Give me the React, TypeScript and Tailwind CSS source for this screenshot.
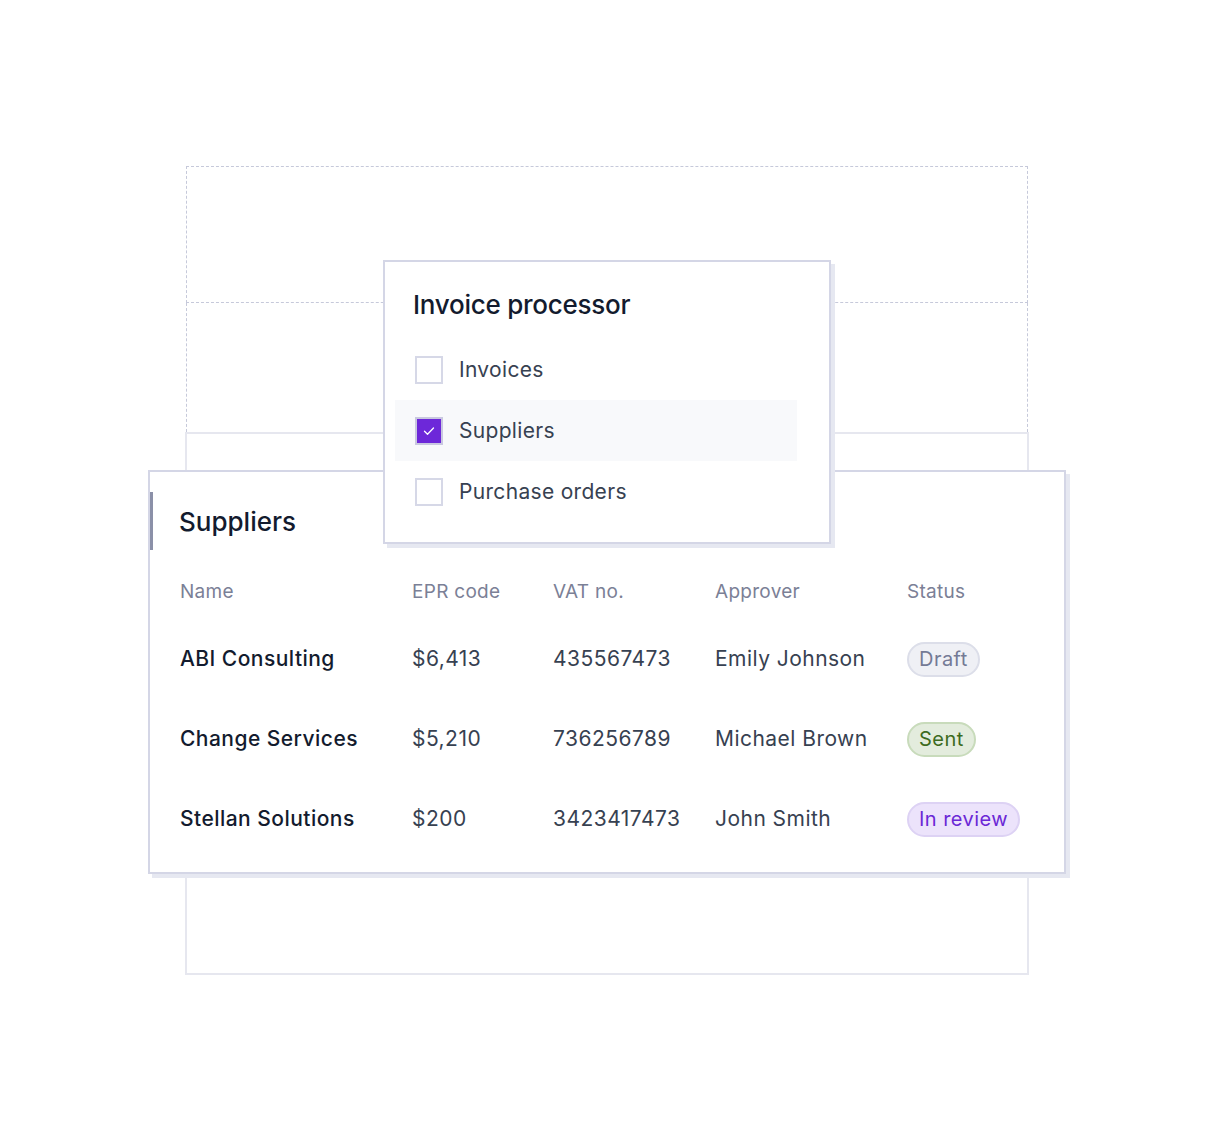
import { useState } from 'react';

type Status = 'Draft' | 'Sent' | 'In review';

const suppliers: { name: string; epr: string; vat: string; approver: string; status: Status }[] = [
  { name: 'ABI Consulting', epr: '$6,413', vat: '435567473', approver: 'Emily Johnson', status: 'Draft' },
  { name: 'Change Services', epr: '$5,210', vat: '736256789', approver: 'Michael Brown', status: 'Sent' },
  { name: 'Stellan Solutions', epr: '$200', vat: '3423417473', approver: 'John Smith', status: 'In review' },
];

const badgeStyles: Record<Status, string> = {
  Draft: 'bg-[#eff0f5] border-[#dcdee9] text-[#747a95]',
  Sent: 'bg-[#e3ecdd] border-[#c8dbbb] text-[#3d6b1e]',
  'In review': 'bg-[#ece3fb] border-[#ddd2f4] text-[#6b28d6]',
};

const cols = 'grid grid-cols-[232px_141px_162px_192px_1fr] pl-[30px]';

function Checkbox({ checked }: { checked: boolean }) {
  return (
    <span
      className={
        'flex h-[28px] w-[28px] items-center justify-center border-2 ' +
        (checked ? 'bg-[#6d28d9] border-[#c9c8e0]' : 'bg-white border-[#d6d8e7]')
      }
    >
      {checked && (
        <svg width="14" height="14" viewBox="0 0 14 14" fill="none">
          <path d="M2.5 7.2l3 3 6-6.2" stroke="white" strokeWidth="1.3" strokeLinecap="round" strokeLinejoin="round" />
        </svg>
      )}
    </span>
  );
}

function ProcessorMenu() {
  const [selected, setSelected] = useState<string[]>(['Suppliers']);
  const options = ['Invoices', 'Suppliers', 'Purchase orders'];

  const toggle = (opt: string) =>
    setSelected((s) => (s.includes(opt) ? s.filter((x) => x !== opt) : [...s, opt]));

  return (
    <div className="absolute left-[198px] top-[94px] w-[448px] h-[284px] bg-white border-2 border-[#d4d6e6] shadow-[4px_4px_0_#e6e8f1] pt-[26px]">
      <h2 className="px-[28px] text-[26px] leading-[34px] tracking-[-0.01em] font-medium text-[#131b2e]">
        Invoice processor
      </h2>
      <div className="mt-[17px] ml-[10px] mr-[32px]">
        {options.map((opt) => (
          <button
            key={opt}
            onClick={() => toggle(opt)}
            className={
              'flex h-[61px] w-full items-center gap-[16px] px-[20px] text-left ' +
              (opt === 'Suppliers' ? 'bg-[#f8f9fb]' : '')
            }
          >
            <Checkbox checked={selected.includes(opt)} />
            <span className="text-[21px] tracking-[0.015em] text-[#374151]">{opt}</span>
          </button>
        ))}
      </div>
    </div>
  );
}

function SuppliersTable() {
  return (
    <div className="absolute left-[-37px] top-[304px] w-[918px] h-[404px] bg-white border-2 border-[#d4d6e6] shadow-[4px_4px_0_#e6e8f1] pt-[20px]">
      <div className="flex h-[58px] items-center border-l-[3px] border-[#8b90a8] pl-[26px]">
        <h2 className="text-[26px] font-medium text-[#131b2e]">Suppliers</h2>
      </div>

      <div className={cols + ' mt-[22px] h-[40px] items-center text-[19px] tracking-[0.015em] text-[#7b8096]'}>
        <span>Name</span>
        <span>EPR code</span>
        <span>VAT no.</span>
        <span>Approver</span>
        <span>Status</span>
      </div>

      <div className="mt-[7px]">
        {suppliers.map((s) => (
          <div
            key={s.name}
            className={cols + ' h-[80px] items-center text-[21px] tracking-[0.022em] text-[#374151]'}
          >
            <span className="font-medium text-[#131b2e]">{s.name}</span>
            <span>{s.epr}</span>
            <span>{s.vat}</span>
            <span>{s.approver}</span>
            <span>
              <span
                className={
                  'inline-flex h-[35px] items-center rounded-full border-2 px-[10px] text-[20px] ' +
                  badgeStyles[s.status]
                }
              >
                {s.status}
              </span>
            </span>
          </div>
        ))}
      </div>
    </div>
  );
}

export default function App() {
  return (
    <div className="min-h-screen bg-white font-['Inter',sans-serif] pt-[166px] pl-[185px]">
      <div className="relative w-[844px]">
        {/* placeholder frame behind the cards */}
        <div className="h-[137px] border border-dashed border-[#c6c9da] mx-px" />
        <div className="h-[129px] border-x border-dashed border-[#c6c9da] mx-px" />
        <div className="h-[543px] border-2 border-[#e6e7ef]" />

        <SuppliersTable />
        <ProcessorMenu />
      </div>
    </div>
  );
}
